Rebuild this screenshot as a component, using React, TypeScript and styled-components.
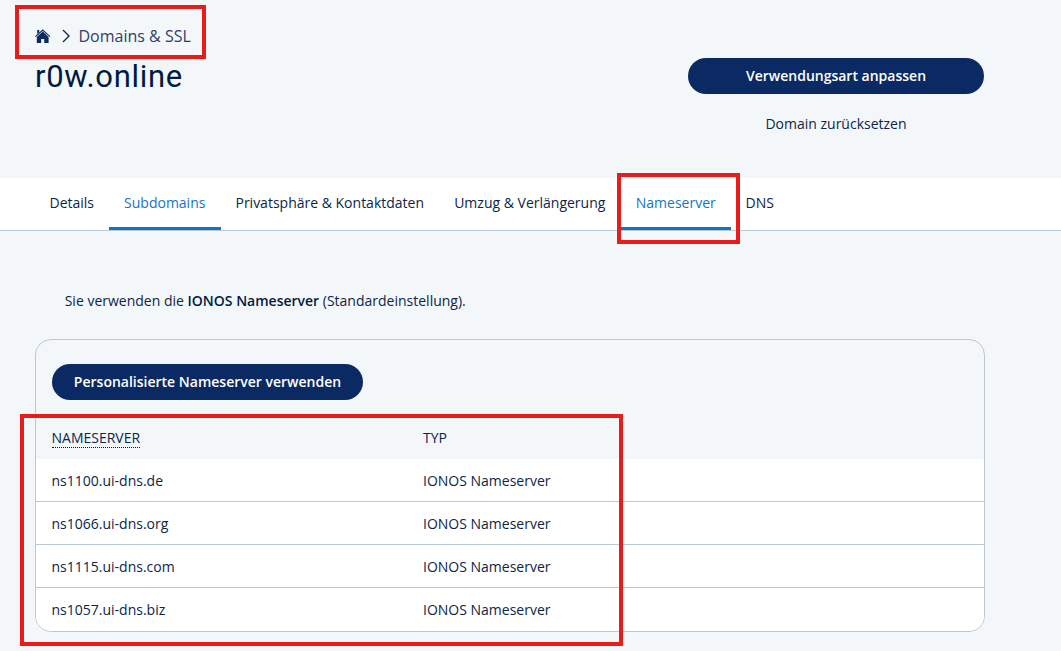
import React from "react";
import styled, { createGlobalStyle, css } from "styled-components";

const Global = createGlobalStyle`
  * { box-sizing: border-box; }
  body { margin: 0; background: #f3f7fa; overflow: hidden; }
`;

const Page = styled.div`
  position: relative;
  width: 1061px;
  height: 651px;
  overflow: hidden;
  background: #f3f7fa;
  color: #0d2547;
  font: 400 14px/20px "Open Sans", "Noto Sans", sans-serif;
`;

const Header = styled.header`
  height: 178px;
  width: 984px;
  padding-left: 35px;
  display: flex;
  justify-content: space-between;
`;

const Heading = styled.div`
  display: flex;
  flex-direction: column;
  padding-top: 24px;
`;

const Breadcrumb = styled.nav`
  display: flex;
  align-items: center;
  height: 24px;
  font-size: 16px;
  color: #2f4069;
`;

const HomeIcon = styled.svg`
  width: 16px;
  height: 14px;
  margin-right: 11px;
`;

const Chevron = styled.svg`
  width: 8px;
  height: 14px;
  margin-right: 8.5px;
`;

const Title = styled.h1`
  margin: 9px 0 0;
  color: #001b41;
  font: 400 31px/40px Roboto, "Open Sans", sans-serif;
  letter-spacing: 0.7px;
`;

const Actions = styled.div`
  display: flex;
  flex-direction: column;
  align-items: center;
  gap: 20px;
  padding-top: 58px;
`;

const Button = styled.button<{ $width: number }>`
  width: ${(p) => p.$width}px;
  height: 36px;
  padding: 0;
  border: 0;
  border-radius: 18px;
  background: #0b2a63;
  color: #fff;
  font: 600 14px/20px "Open Sans", sans-serif;
  white-space: nowrap;
`;

const ResetLink = styled.a`
  color: inherit;
`;

const Tabs = styled.nav`
  display: flex;
  height: 53px;
  padding-left: 35px;
  background: #fff;
  border-bottom: 1px solid #bac8d3;
`;

const Tab = styled.a<{ $width: number; $active?: boolean }>`
  display: flex;
  justify-content: center;
  width: ${(p) => p.$width}px;
  padding: 15px 0.5px 0 0;
  white-space: nowrap;
  ${(p) =>
    p.$active &&
    css`
      color: #1474c4;
      border-bottom: 3px solid #1474c4;
    `}
`;

const Intro = styled.p`
  margin: 0;
  padding: 60px 0 0 64.7px;
  strong {
    font-weight: 600;
    color: #001b41;
  }
`;

const Card = styled.section`
  width: 950px;
  height: 293px;
  margin: 28px 0 0 35px;
  border: 1px solid #bac8d3;
  border-radius: 16px;
  overflow: hidden;
`;

const Toolbar = styled.div`
  padding: 24px 16px 17px;
  height: 77px;
`;

const Row = styled.div<{ $head?: boolean }>`
  display: grid;
  grid-template-columns: 371.5px 1fr;
  height: 43px;
  padding: 12px 0 0 15.5px;
  background: #fff;
  border-bottom: 1px solid #bac8d3;
  &:last-child { border-bottom: 0; }
  ${(p) =>
    p.$head &&
    css`
      height: 42px;
      padding-top: 11px;
      background: transparent;
      border: 0;
    `}
`;

const Term = styled.span`
  display: inline-block;
  height: 20px;
  border-bottom: 1px dotted #001b41;
`;

const Marker = styled.div<{ $x: number; $y: number; $w: number; $h: number }>`
  position: absolute;
  left: ${(p) => p.$x}px;
  top: ${(p) => p.$y}px;
  width: ${(p) => p.$w}px;
  height: ${(p) => p.$h}px;
  border: 4px solid #e91c1c;
`;

const tabs = [
  { label: "Details", width: 74 },
  { label: "Subdomains", width: 112, active: true },
  { label: "Privatsphäre & Kontaktdaten", width: 218 },
  { label: "Umzug & Verlängerung", width: 182 },
  { label: "Nameserver", width: 110, active: true },
  { label: "DNS", width: 58 },
];

const servers = ["ns1100.ui-dns.de", "ns1066.ui-dns.org", "ns1115.ui-dns.com", "ns1057.ui-dns.biz"];

export default function App() {
  return (
    <Page>
      <Global />
      <Header>
        <Heading>
          <Breadcrumb>
            <HomeIcon viewBox="0 0 16 14">
              <path d="M.4 7.6 7.7 1l7.3 6.6" fill="none" stroke="#0b2a63" strokeWidth="1.1" />
              <path d="M2.2 1h2v2.2l-2 1.8z" fill="#0b2a63" />
              <path d="M7.7 2.6 1.8 8V14h4.4V10h3v4h4.4V8z" fill="#0b2a63" />
            </HomeIcon>
            <Chevron viewBox="0 0 8 14">
              <path d="M1 1l6 6-6 6" fill="none" stroke="#16294f" strokeWidth="1.4" />
            </Chevron>
            <span>Domains &amp; SSL</span>
          </Breadcrumb>
          <Title>r0w.online</Title>
        </Heading>
        <Actions>
          <Button $width={296}>Verwendungsart anpassen</Button>
          <ResetLink>Domain zurücksetzen</ResetLink>
        </Actions>
      </Header>
      <Tabs>
        {tabs.map((t) => (
          <Tab key={t.label} $width={t.width} $active={t.active}>{t.label}</Tab>
        ))}
      </Tabs>
      <Intro>
        Sie verwenden die <strong>IONOS Nameserver</strong> (Standardeinstellung).
      </Intro>
      <Card>
        <Toolbar>
          <Button $width={311}>Personalisierte Nameserver verwenden</Button>
        </Toolbar>
        <Row $head>
          <div><Term>NAMESERVER</Term></div>
          <div>TYP</div>
        </Row>
        {servers.map((s) => (
          <Row key={s}>
            <div>{s}</div>
            <div>IONOS Nameserver</div>
          </Row>
        ))}
      </Card>
      <Marker $x={15} $y={5} $w={191} $h={54} />
      <Marker $x={617} $y={173} $w={123} $h={71} />
      <Marker $x={20} $y={414} $w={603} $h={232} />
    </Page>
  );
}
